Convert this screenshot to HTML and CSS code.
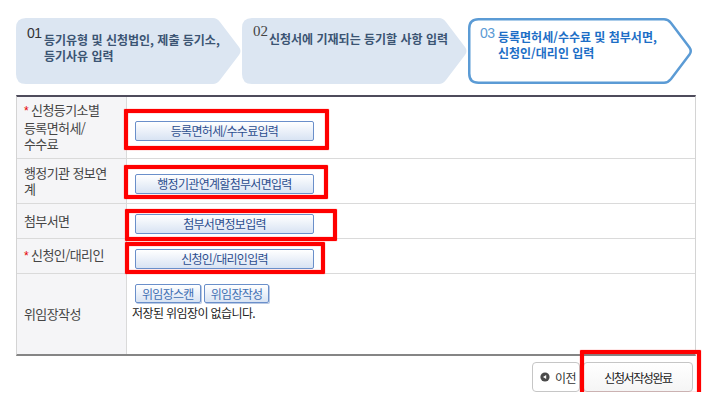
FILE: index.html
```html
<!DOCTYPE html>
<html lang="ko">
<head>
<meta charset="utf-8">
<title>신청서 작성</title>
<link rel="stylesheet" href="styles.css">
</head>
<body>
<div class="page">
  <ol class="steps">
    <li class="step">
      <svg class="step-bg" viewBox="0 0 225 66" width="225" height="66"><path class="shape" d="M10,0 H197 Q201,0 204,4 L223,29 Q226,33 223,37 L204,62 Q201,66 197,66 H10 Q0,66 0,56 V10 Q0,0 10,0 Z"/></svg>
      <span class="step-no">01</span>
      <span class="step-text">등기유형 및 신청법인, 제출 등기소,<br>등기사유 입력</span>
    </li>
    <li class="step step-2">
      <svg class="step-bg" viewBox="0 0 225 66" width="225" height="66"><path class="shape" d="M10,0 H197 Q201,0 204,4 L223,29 Q226,33 223,37 L204,62 Q201,66 197,66 H10 Q0,66 0,56 V10 Q0,0 10,0 Z"/></svg>
      <span class="step-no">02</span>
      <span class="step-text">신청서에 기재되는 등기할 사항 입력</span>
    </li>
    <li class="step step-current">
      <svg class="step-bg" viewBox="0 0 225 66" width="225" height="66"><path class="shape" d="M10.5,1.25 H196 Q200,1.25 203,5 L221.5,29.5 Q224,33 221.5,36.5 L203,61 Q200,64.75 196,64.75 H10.5 Q1.25,64.75 1.25,55.5 V10.5 Q1.25,1.25 10.5,1.25 Z"/></svg>
      <span class="step-no">03</span>
      <span class="step-text">등록면허세/수수료 및 첨부서면,<br>신청인/대리인 입력</span>
    </li>
  </ol>

  <div class="form">
    <div class="row row-1">
      <div class="label"><span><span class="req">*</span> 신청등기소별<br>등록면허세/<br>수수료</span></div>
      <div class="field">
        <span class="mark"><button class="btn">등록면허세/수수료입력</button><span class="hl hl-1"></span></span>
      </div>
    </div>
    <div class="row row-2">
      <div class="label"><span>행정기관 정보연<br>계</span></div>
      <div class="field">
        <span class="mark"><button class="btn">행정기관연계할첨부서면입력</button><span class="hl hl-2"></span></span>
      </div>
    </div>
    <div class="row row-3">
      <div class="label"><span>첨부서면</span></div>
      <div class="field">
        <span class="mark"><button class="btn">첨부서면정보입력</button><span class="hl hl-3"></span></span>
      </div>
    </div>
    <div class="row row-4">
      <div class="label"><span><span class="req">*</span> 신청인/대리인</span></div>
      <div class="field">
        <span class="mark"><button class="btn">신청인/대리인입력</button><span class="hl hl-4"></span></span>
      </div>
    </div>
    <div class="row row-5">
      <div class="label"><span>위임장작성</span></div>
      <div class="field field-stack">
        <div class="btn-group">
          <button class="btn btn-sm">위임장스캔</button>
          <button class="btn btn-sm">위임장작성</button>
        </div>
        <p class="note">저장된 위임장이 없습니다.</p>
      </div>
    </div>
  </div>

  <div class="actions">
    <button class="btn-prev">
      <svg class="prev-icon" viewBox="0 0 10 10" width="10" height="10"><circle cx="5" cy="5" r="4.6" fill="#4a4a4a"/><path d="M3,5 L6.2,2.9 V7.1 Z" fill="#fff"/></svg>
      <span>이전</span>
    </button>
    <span class="mark"><button class="btn-done">신청서작성완료</button><span class="hl hl-5"></span></span>
  </div>
</div>
</body>
</html>
```

FILE: styles.css
```css
* {
  box-sizing: border-box;
}

body {
  margin: 0;
  background: #ffffff;
  font-family: "Noto Sans CJK KR", "Noto Sans", sans-serif;
  color: #333333;
}

.page {
  width: 714px;
  padding: 18px 18px 0 16px;
}

/* ---------- steps ---------- */
.steps {
  display: flex;
  gap: 1px;
  list-style: none;
  margin: 0;
  padding: 0;
  height: 66px;
}

.step {
  position: relative;
  flex: 0 0 225px;
  height: 66px;
  display: flex;
  align-items: flex-start;
  padding-left: 11px;
}

.step-bg {
  position: absolute;
  left: 0;
  top: 0;
}

.step-bg .shape {
  fill: #dce6f2;
}

.step-no,
.step-text {
  position: relative;
}

.step-no {
  width: 17px;
  margin-top: 8px;
  font-family: "Liberation Sans", Arial, sans-serif;
  font-size: 14px;
  line-height: 14px;
  letter-spacing: -0.6px;
  color: #333333;
}

.step-text {
  margin-top: 14px;
  font-size: 12px;
  line-height: 16px;
  font-weight: 700;
  letter-spacing: 0;
  white-space: nowrap;
  color: #3b5473;
}

.step-2 .step-no {
  width: 16px;
  font-family: "Liberation Serif", "Times New Roman", serif;
  font-size: 15px;
  line-height: 15px;
  letter-spacing: 0;
  color: #444444;
  margin-top: 6px;
}

.step-2 .step-text {
  margin-top: 13px;
}

.step-current {
  padding-left: 12px;
}

.step-current .step-bg .shape {
  fill: #ffffff;
  stroke: #5b9bd5;
  stroke-width: 2.5;
}

.step-current .step-no {
  width: 18px;
  color: #5b9bd5;
}

.step-current .step-text {
  margin-top: 11px;
  color: #1d6ec6;
}

/* ---------- form ---------- */
.form {
  margin-top: 11px;
  border-top: 2px solid #4e4b5b;
  border-bottom: 2px solid #858585;
  border-left: 1px solid #d4d4d4;
  border-right: 1px solid #d4d4d4;
}

.row {
  display: grid;
  grid-template-columns: 110px 1fr;
  border-bottom: 1px solid #dadada;
}

.row-1 { height: 62px; }
.row-2 { height: 45px; }
.row-3 { height: 35px; }
.row-4 { height: 35px; }
.row-5 { height: 80px; border-bottom: 0; }

.label {
  display: flex;
  align-items: center;
  padding: 0 4px 0 7px;
  background: #f5f5f7;
  border-right: 1px solid #dadada;
  font-size: 13px;
  line-height: 16.5px;
  letter-spacing: -0.6px;
  color: #454545;
  white-space: nowrap;
}

.req {
  color: #e60000;
  font-family: "Liberation Sans", Arial, sans-serif;
  font-size: 12px;
}

.field {
  display: flex;
  align-items: center;
  padding: 6px 0 0 8px;
}

.field-stack {
  flex-direction: column;
  align-items: flex-start;
  padding-top: 10px;
}

.mark {
  position: relative;
  display: inline-flex;
}

.hl {
  position: absolute;
  border: 4px solid #ff0000;
  border-radius: 1px;
  box-shadow: 0 0 1px #ff0000, inset 0 0 1px #ff0000;
  pointer-events: none;
}

.hl-1 { left: -11px; top: -12px; right: -15px; bottom: -9px; }
.hl-2 { left: -11px; top: -9px; right: -14px; bottom: -5px; }
.hl-3 { left: -10px; top: -5px; right: -23px; bottom: -7px; }
.hl-4 { left: -10px; top: -7px; right: -11px; bottom: -5px; }
.hl-5 { left: -3px; top: -12px; right: -8px; bottom: -4px; }

.btn {
  width: 179px;
  height: 20px;
  padding: 0;
  border: 1px solid #6a8fca;
  border-radius: 2px;
  background: linear-gradient(#ffffff, #d8e3f3);
  font-family: "Noto Sans CJK KR", sans-serif;
  font-size: 12px;
  line-height: 18px;
  letter-spacing: -0.7px;
  color: #2c4e8f;
}

.btn-group {
  display: flex;
  gap: 3px;
}

.btn-sm {
  width: auto;
  height: 19px;
  padding: 0 6px;
  line-height: 17px;
  color: #3f6fb3;
  box-shadow: 1px 1px 0 #b9c9e4;
}

.note {
  margin: 2px 0 0 -3px;
  font-size: 12px;
  line-height: 15px;
  letter-spacing: -0.6px;
  color: #222222;
}

/* ---------- actions ---------- */
.actions {
  display: flex;
  justify-content: flex-end;
  gap: 3px;
  margin: 6px 3px 0 0;
}

.btn-prev {
  display: flex;
  align-items: center;
  gap: 5px;
  width: 48px;
  height: 30px;
  padding: 0 0 0 7px;
  border: 1px solid #c6c6c6;
  border-radius: 4px;
  background: #ffffff;
  font-family: "Noto Sans CJK KR", sans-serif;
  font-size: 12px;
  letter-spacing: -0.6px;
  color: #333333;
}

.prev-icon {
  flex: 0 0 auto;
}

.btn-done {
  width: 110px;
  height: 30px;
  padding: 0;
  border: 1px solid #c6c6c6;
  border-radius: 4px;
  background: linear-gradient(#ffffff, #f5f5f5);
  font-family: "Noto Sans CJK KR", sans-serif;
  font-size: 12px;
  letter-spacing: -1.4px;
  color: #222222;
}
```
